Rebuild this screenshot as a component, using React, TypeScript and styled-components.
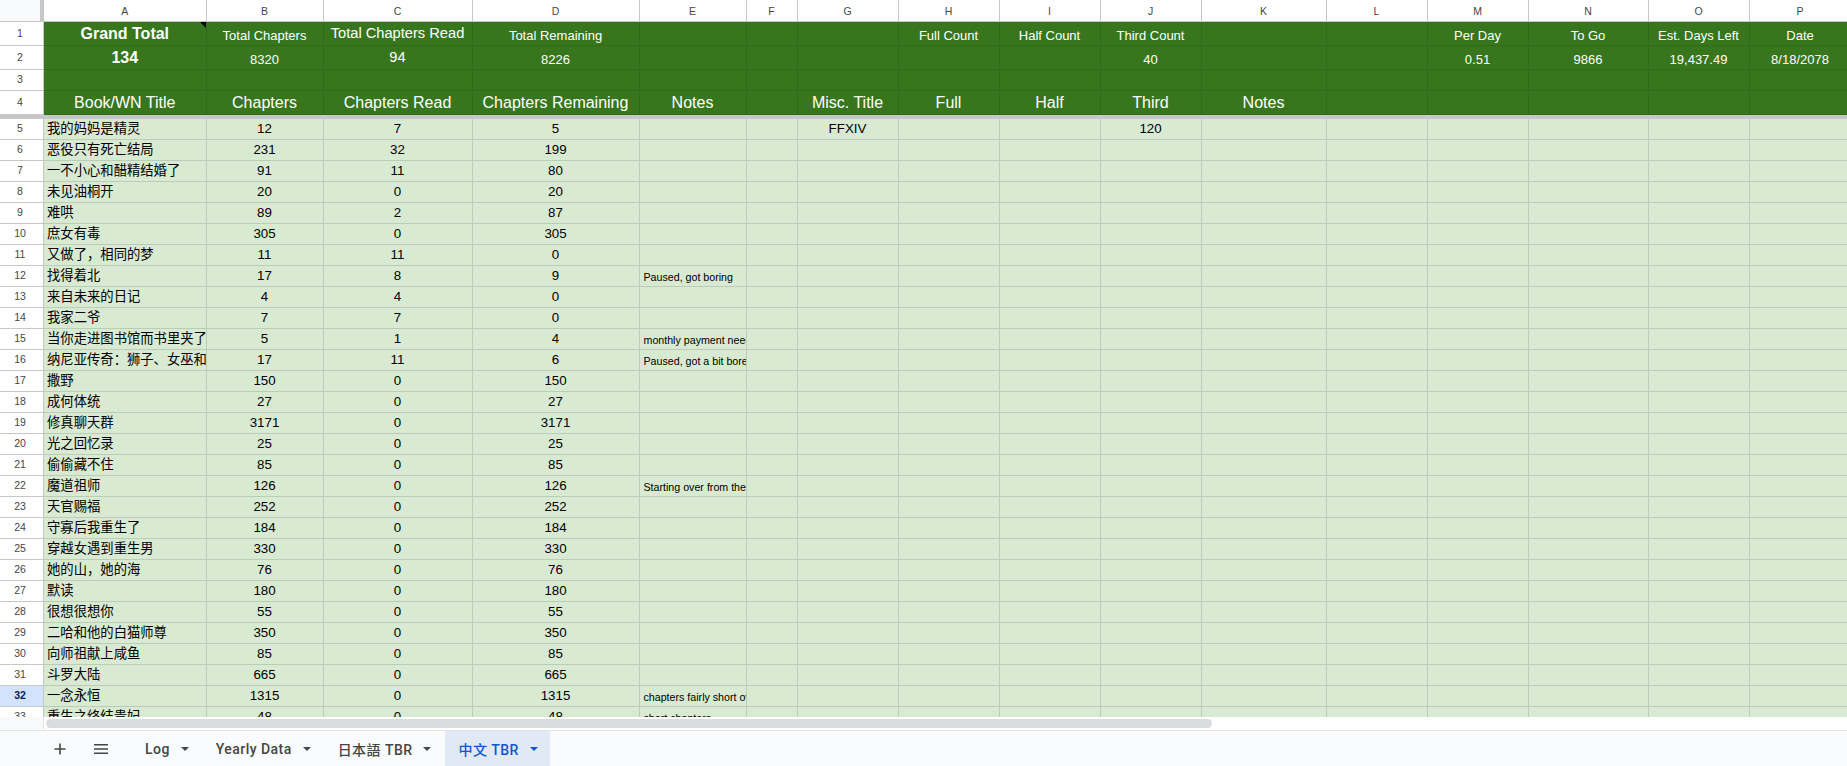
import React from "react";
import styled, { createGlobalStyle } from "styled-components";

const GRID = "44px 162.5px 117px 149px 167px 107px 51px 101px 101px 101px 101px 125px 101px 101px 120px 101px 102px";
const COLS = ["A", "B", "C", "D", "E", "F", "G", "H", "I", "J", "K", "L", "M", "N", "O", "P"];

const Global = createGlobalStyle`
  html, body { margin: 0; padding: 0; height: 100%; background: #fff; overflow: hidden; }
  * { box-sizing: border-box; }
`;

const Page = styled.div`
  width: 1847px;
  height: 766px;
  display: flex;
  flex-direction: column;
  overflow: hidden;
  font-family: "Liberation Sans", "Noto Sans CJK SC", sans-serif;
`;

const ColumnHeaderRow = styled.div`
  display: grid;
  grid-template-columns: ${GRID};
  height: 22px;
  flex: none;
  border-bottom: 1px solid #c7c7c7;
`;

const Corner = styled.div`
  background: #f8f9fa;
  border-right: 4px solid #c7c7c7;
`;

const ColumnLabel = styled.div`
  display: flex;
  align-items: center;
  justify-content: center;
  font-size: 10.5px;
  color: #444746;
  background: #fff;
  border-right: 1px solid #c7c7c7;
`;

const Row = styled.div<{ $h: number }>`
  display: grid;
  grid-template-columns: ${GRID};
  height: ${(p) => p.$h}px;
  flex: none;
`;

const RowLabel = styled.div<{ $active?: boolean }>`
  display: flex;
  align-items: center;
  justify-content: center;
  padding: 0 3px 2px 0;
  font-size: 10.5px;
  font-weight: ${(p) => (p.$active ? 700 : 400)};
  color: ${(p) => (p.$active ? "#041e49" : "#444746")};
  background: ${(p) => (p.$active ? "#d3e3fd" : "#fff")};
  border-right: 1px solid #c7c7c7;
  border-bottom: 1px solid #c7c7c7;
`;

const HeadCell = styled.div<{ $size: number; $bold?: boolean; $pb: number }>`
  position: relative;
  display: flex;
  align-items: flex-end;
  justify-content: center;
  padding: 0 2px ${(p) => p.$pb}px;
  background: #38761d;
  color: #fff;
  font-size: ${(p) => p.$size}px;
  font-weight: ${(p) => (p.$bold ? 700 : 400)};
  line-height: 1.2;
  white-space: nowrap;
  overflow: hidden;
  border-right: 1px solid #316a18;
  border-bottom: 1px solid #316a18;
`;

const NoteFlag = styled.span`
  position: absolute;
  top: 0;
  right: 0;
  width: 0;
  height: 0;
  border-top: 6px solid #000;
  border-left: 6px solid transparent;
`;

const FreezeBar = styled.div`
  height: 4px;
  flex: none;
  background: #c7c7c7;
`;

const Body = styled.div`
  flex: none;
  height: 598px;
  overflow: hidden;
`;

const DataCell = styled.div<{ $align?: "left" | "center"; $small?: boolean }>`
  display: flex;
  align-items: center;
  justify-content: ${(p) => (p.$align === "left" ? "flex-start" : "center")};
  padding: ${(p) => (p.$align !== "left" ? "0 0 2px" : p.$small ? "1px 0 0 4px" : "0 0 3px 3px")};
  background: #d9ead3;
  color: #000;
  font-size: ${(p) => (p.$small ? "10.67px" : "13.33px")};
  white-space: nowrap;
  overflow: hidden;
  border-right: 1px solid #bccdb7;
  border-bottom: 1px solid #bccdb7;
`;

const ScrollRow = styled.div`
  flex: none;
  height: 13px;
  display: flex;
  align-items: flex-start;
  padding-top: 2px;
  background: #fff;
`;

const ScrollCorner = styled.div`
  width: 44px;
  height: 12px;
  margin-top: -2px;
  flex: none;
  background: #f8f9fa;
  border-right: 1px solid #e3e3e3;
`;

const ScrollThumb = styled.div`
  width: 1166px;
  height: 9px;
  margin-left: 2px;
  background: #dadce0;
  border-radius: 5px;
`;

const TabBar = styled.div`
  flex: 1;
  display: flex;
  align-items: stretch;
  background: #f9fbfd;
  border-top: 1px solid #e1e3e1;
`;

const TabTools = styled.div`
  display: flex;
  align-items: center;
  width: 132px;
  flex: none;
  padding-left: 52px;
  gap: 25px;
  color: #444746;
`;

const ToolIcon = styled.svg`
  width: 16px;
  height: 16px;
  display: block;
  fill: currentColor;
`;

const Tab = styled.div<{ $active?: boolean }>`
  display: flex;
  align-items: center;
  gap: 11px;
  padding: 0 ${(p) => (p.$active ? 12 : 14)}px 0 13px;
  font-family: Roboto, "Noto Sans CJK SC", sans-serif;
  font-size: 14px;
  font-weight: 500;
  letter-spacing: 0.45px;
  white-space: nowrap;
  color: ${(p) => (p.$active ? "#0b57d0" : "#444746")};
  background: ${(p) => (p.$active ? "#e1e9f7" : "transparent")};
`;

const Caret = styled.span`
  width: 0;
  height: 0;
  border-left: 4px solid transparent;
  border-right: 4px solid transparent;
  border-top: 4px solid currentColor;
`;

type Head = { t?: string; s?: number; b?: boolean; pb?: number; flag?: boolean };

const h = (t: string, s = 13, pb = 1, b = false, flag = false): Head => ({ t, s, pb, b, flag });

const ROW1: Head[] = [
  h("Grand Total", 16, 2, true, true), h("Total Chapters"), h("Total Chapters Read", 14.67, 2), h("Total Remaining"),
  {}, {}, {}, h("Full Count"), h("Half Count"), h("Third Count"), {}, {}, h("Per Day"), h("To Go"), h("Est. Days Left"), h("Date"),
];
const ROW2: Head[] = [
  h("134", 16, 2, true), h("8320"), h("94", 14.67, 2), h("8226"),
  {}, {}, {}, {}, {}, h("40"), {}, {}, h("0.51"), h("9866"), h("19,437.49"), h("8/18/2078"),
];
const ROW4: Head[] = [
  h("Book/WN Title", 16, 2), h("Chapters", 16, 2), h("Chapters Read", 16, 2), h("Chapters Remaining", 16, 2), h("Notes", 16, 2),
  {}, h("Misc. Title", 16, 2), h("Full", 16, 2), h("Half", 16, 2), h("Third", 16, 2), h("Notes", 16, 2), {}, {}, {}, {}, {},
];

type Book = [string, number, number, number, string?];
const BOOKS: Book[] = [
  ["我的妈妈是精灵", 12, 7, 5],
  ["恶役只有死亡结局", 231, 32, 199],
  ["一不小心和醋精结婚了", 91, 11, 80],
  ["未见油桐开", 20, 0, 20],
  ["难哄", 89, 2, 87],
  ["庶女有毒", 305, 0, 305],
  ["又做了\uFF0C相同的梦", 11, 11, 0],
  ["找得着北", 17, 8, 9, "Paused, got boring"],
  ["来自未来的日记", 4, 4, 0],
  ["我家二爷", 7, 7, 0],
  ["当你走进图书馆而书里夹了", 5, 1, 4, "monthly payment needed"],
  ["纳尼亚传奇\uFF1A狮子、女巫和魔衣橱", 17, 11, 6, "Paused, got a bit bored"],
  ["撒野", 150, 0, 150],
  ["成何体统", 27, 0, 27],
  ["修真聊天群", 3171, 0, 3171],
  ["光之回忆录", 25, 0, 25],
  ["偷偷藏不住", 85, 0, 85],
  ["魔道祖师", 126, 0, 126, "Starting over from the beginning"],
  ["天官赐福", 252, 0, 252],
  ["守寡后我重生了", 184, 0, 184],
  ["穿越女遇到重生男", 330, 0, 330],
  ["她的山\uFF0C她的海", 76, 0, 76],
  ["默读", 180, 0, 180],
  ["很想很想你", 55, 0, 55],
  ["二哈和他的白猫师尊", 350, 0, 350],
  ["向师祖献上咸鱼", 85, 0, 85],
  ["斗罗大陆", 665, 0, 665],
  ["一念永恒", 1315, 0, 1315, "chapters fairly short overall"],
  ["重生之终结贵妃", 48, 0, 48, "short chapters"],
];

function HeadRow({ n, height, cells }: { n: number; height: number; cells?: Head[] }) {
  return (
    <Row $h={height}>
      <RowLabel>{n}</RowLabel>
      {COLS.map((c, i) => {
        const cell = cells?.[i] ?? {};
        return (
          <HeadCell key={c} $size={cell.s ?? 13} $bold={cell.b} $pb={cell.pb ?? 1}>
            {cell.t}
            {cell.flag && <NoteFlag />}
          </HeadCell>
        );
      })}
    </Row>
  );
}

function BookRow({ book, n }: { book: Book; n: number }) {
  const [title, total, read, left, note] = book;
  return (
    <Row $h={21}>
      <RowLabel $active={n === 32}>{n}</RowLabel>
      <DataCell $align="left">{title}</DataCell>
      <DataCell>{total}</DataCell>
      <DataCell>{read}</DataCell>
      <DataCell>{left}</DataCell>
      <DataCell $align="left" $small>{note}</DataCell>
      <DataCell />
      <DataCell>{n === 5 ? "FFXIV" : ""}</DataCell>
      <DataCell />
      <DataCell />
      <DataCell>{n === 5 ? "120" : ""}</DataCell>
      {COLS.slice(10).map((c) => (
        <DataCell key={c} />
      ))}
    </Row>
  );
}

const TABS = ["Log", "Yearly Data", "日本語 TBR"];

export default function App() {
  return (
    <Page>
      <Global />
      <ColumnHeaderRow>
        <Corner />
        {COLS.map((c) => (
          <ColumnLabel key={c}>{c}</ColumnLabel>
        ))}
      </ColumnHeaderRow>
      <HeadRow n={1} height={24} cells={ROW1} />
      <HeadRow n={2} height={24} cells={ROW2} />
      <HeadRow n={3} height={21} />
      <HeadRow n={4} height={24} cells={ROW4} />
      <FreezeBar />
      <Body>
        {BOOKS.map((b, i) => (
          <BookRow key={i} book={b} n={i + 5} />
        ))}
      </Body>
      <ScrollRow>
        <ScrollCorner />
        <ScrollThumb />
      </ScrollRow>
      <TabBar>
        <TabTools>
          <ToolIcon viewBox="0 0 16 16">
            <path d="M7.2 2.5h1.6v4.7h4.7v1.6H8.8v4.7H7.2V8.8H2.5V7.2h4.7z" />
          </ToolIcon>
          <ToolIcon viewBox="0 0 16 16">
            <path d="M1 3h14v1.5H1zM1 7.25h14v1.5H1zM1 11.5h14V13H1z" />
          </ToolIcon>
        </TabTools>
        {TABS.map((t) => (
          <Tab key={t}>
            {t}
            <Caret />
          </Tab>
        ))}
        <Tab $active>
          中文 TBR
          <Caret />
        </Tab>
      </TabBar>
    </Page>
  );
}
